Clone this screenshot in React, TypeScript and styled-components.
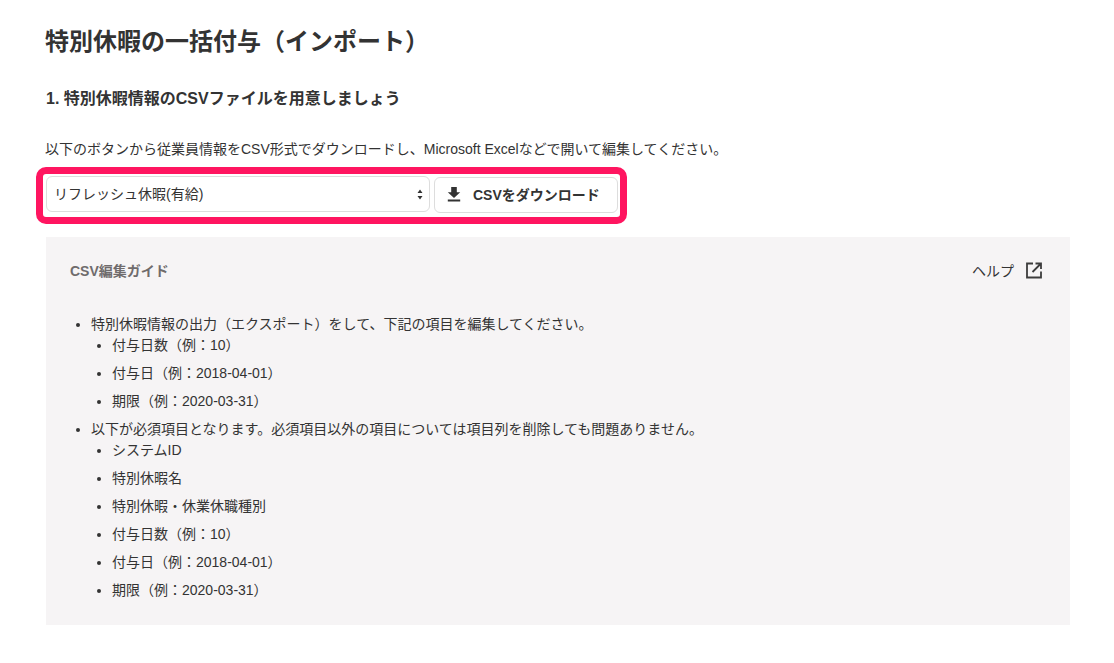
import React from 'react'
import styled, { createGlobalStyle } from 'styled-components'

const arrows =
  "data:image/svg+xml,%3Csvg xmlns='http://www.w3.org/2000/svg' width='6' height='11'%3E%3Cpath d='M3 0.5L5.5 4H0.5Z M3 10.5L0.5 7H5.5Z' fill='%23333'/%3E%3C/svg%3E"

const exportItems = ['付与日数（例：10）', '付与日（例：2018-04-01）', '期限（例：2020-03-31）']
const requiredItems = [
  'システムID',
  '特別休暇名',
  '特別休暇・休業休職種別',
  '付与日数（例：10）',
  '付与日（例：2018-04-01）',
  '期限（例：2020-03-31）',
]

export default function App() {
  return (
    <Page>
      <GlobalStyle />
      <Title>特別休暇の一括付与（インポート）</Title>
      <StepTitle>1. 特別休暇情報のCSVファイルを用意しましょう</StepTitle>
      <Lead>
        以下のボタンから従業員情報をCSV形式でダウンロードし、Microsoft Excelなどで開いて編集してください。
      </Lead>
      <Controls>
        <TypeSelect defaultValue="refresh">
          <option value="refresh">リフレッシュ休暇(有給)</option>
        </TypeSelect>
        <DownloadButton type="button">
          <svg width="16" height="16" viewBox="0 0 16 16" aria-hidden="true">
            <path d="M5.2 1h5.6v5.2h3.4L8 12 1.8 6.2h3.4z M1.8 13.6h12.4V15.6H1.8z" fill="#333" />
          </svg>
          CSVをダウンロード
        </DownloadButton>
      </Controls>
      <Guide>
        <GuideHeader>
          <GuideTitle>CSV編集ガイド</GuideTitle>
          <HelpLink href="#">
            ヘルプ
            <svg width="18" height="18" viewBox="0 0 18 18" aria-hidden="true">
              <path
                d="M8 2.5H2v14h14v-6 M10.5 2.5H16V8 M16 2.5L7.5 11"
                fill="none"
                stroke="#3c3c3c"
                strokeWidth="1.8"
              />
            </svg>
          </HelpLink>
        </GuideHeader>
        <OuterList>
          <li>
            特別休暇情報の出力（エクスポート）をして、下記の項目を編集してください。
            <InnerList>
              {exportItems.map((item) => (
                <li key={item}>{item}</li>
              ))}
            </InnerList>
          </li>
          <li>
            以下が必須項目となります。必須項目以外の項目については項目列を削除しても問題ありません。
            <InnerList>
              {requiredItems.map((item) => (
                <li key={item}>{item}</li>
              ))}
            </InnerList>
          </li>
        </OuterList>
      </Guide>
    </Page>
  )
}

const GlobalStyle = createGlobalStyle`
  html, body {
    margin: 0;
    background: #fff;
  }
  body {
    font-family: "Liberation Sans", "Noto Sans CJK JP", sans-serif;
    color: #333;
  }
`

const Page = styled.div`
  width: 1114px;
  height: 663px;
  box-sizing: border-box;
  padding: 26px 44px 0 46px;
  overflow: hidden;
`

const Title = styled.h1`
  margin: 0 0 0 -1px;
  font-size: 24px;
  line-height: 32px;
  font-weight: 700;
`

const StepTitle = styled.h2`
  margin: 29px 0 0;
  font-size: 16px;
  line-height: 24px;
  font-weight: 700;
`

const Lead = styled.p`
  margin: 28px 0 0 -1px;
  font-size: 14px;
  line-height: 21px;
`

const Controls = styled.div`
  position: relative;
  display: flex;
  align-items: flex-start;
  gap: 4px;
  margin-top: 16px;
  width: 572px;

  &::after {
    content: '';
    position: absolute;
    left: -10px;
    top: -9px;
    width: 591px;
    height: 57px;
    box-sizing: border-box;
    border: 7px solid #ff1560;
    border-radius: 10px;
    pointer-events: none;
  }
`

const TypeSelect = styled.select`
  appearance: none;
  width: 384px;
  height: 36px;
  box-sizing: border-box;
  padding: 0 7px;
  border: 1px solid #ddd;
  border-radius: 6px;
  background: #fff url("${arrows}") no-repeat right 6px center;
  font: inherit;
  font-size: 14px;
  color: #333;
`

const DownloadButton = styled.button`
  display: flex;
  align-items: center;
  gap: 11px;
  width: 184px;
  height: 36px;
  margin-top: 1px;
  box-sizing: border-box;
  padding: 0 0 2px 11px;
  border: 1px solid #ddd;
  border-radius: 6px;
  background: #fff;
  font: inherit;
  font-size: 14px;
  font-weight: 700;
  color: #333;
`

const Guide = styled.section`
  margin-top: 24px;
  height: 388px;
  box-sizing: border-box;
  padding: 23px 27px 0 24px;
  background: #f6f4f5;
`

const GuideHeader = styled.div`
  display: flex;
  align-items: center;
  justify-content: space-between;
  height: 20px;
`

const GuideTitle = styled.div`
  font-size: 14px;
  font-weight: 700;
  color: #6f6b6c;
`

const HelpLink = styled.a`
  display: flex;
  align-items: center;
  gap: 11px;
  font-size: 14px;
  color: #333;
  text-decoration: none;
`

const OuterList = styled.ul`
  margin: 34px 0 0;
  padding: 0 0 0 21px;
  font-size: 14px;
  line-height: 21px;
`

const InnerList = styled.ul`
  margin: 0;
  padding: 0 0 0 21px;
  list-style-type: disc;

  li {
    margin-bottom: 7px;
  }
`
